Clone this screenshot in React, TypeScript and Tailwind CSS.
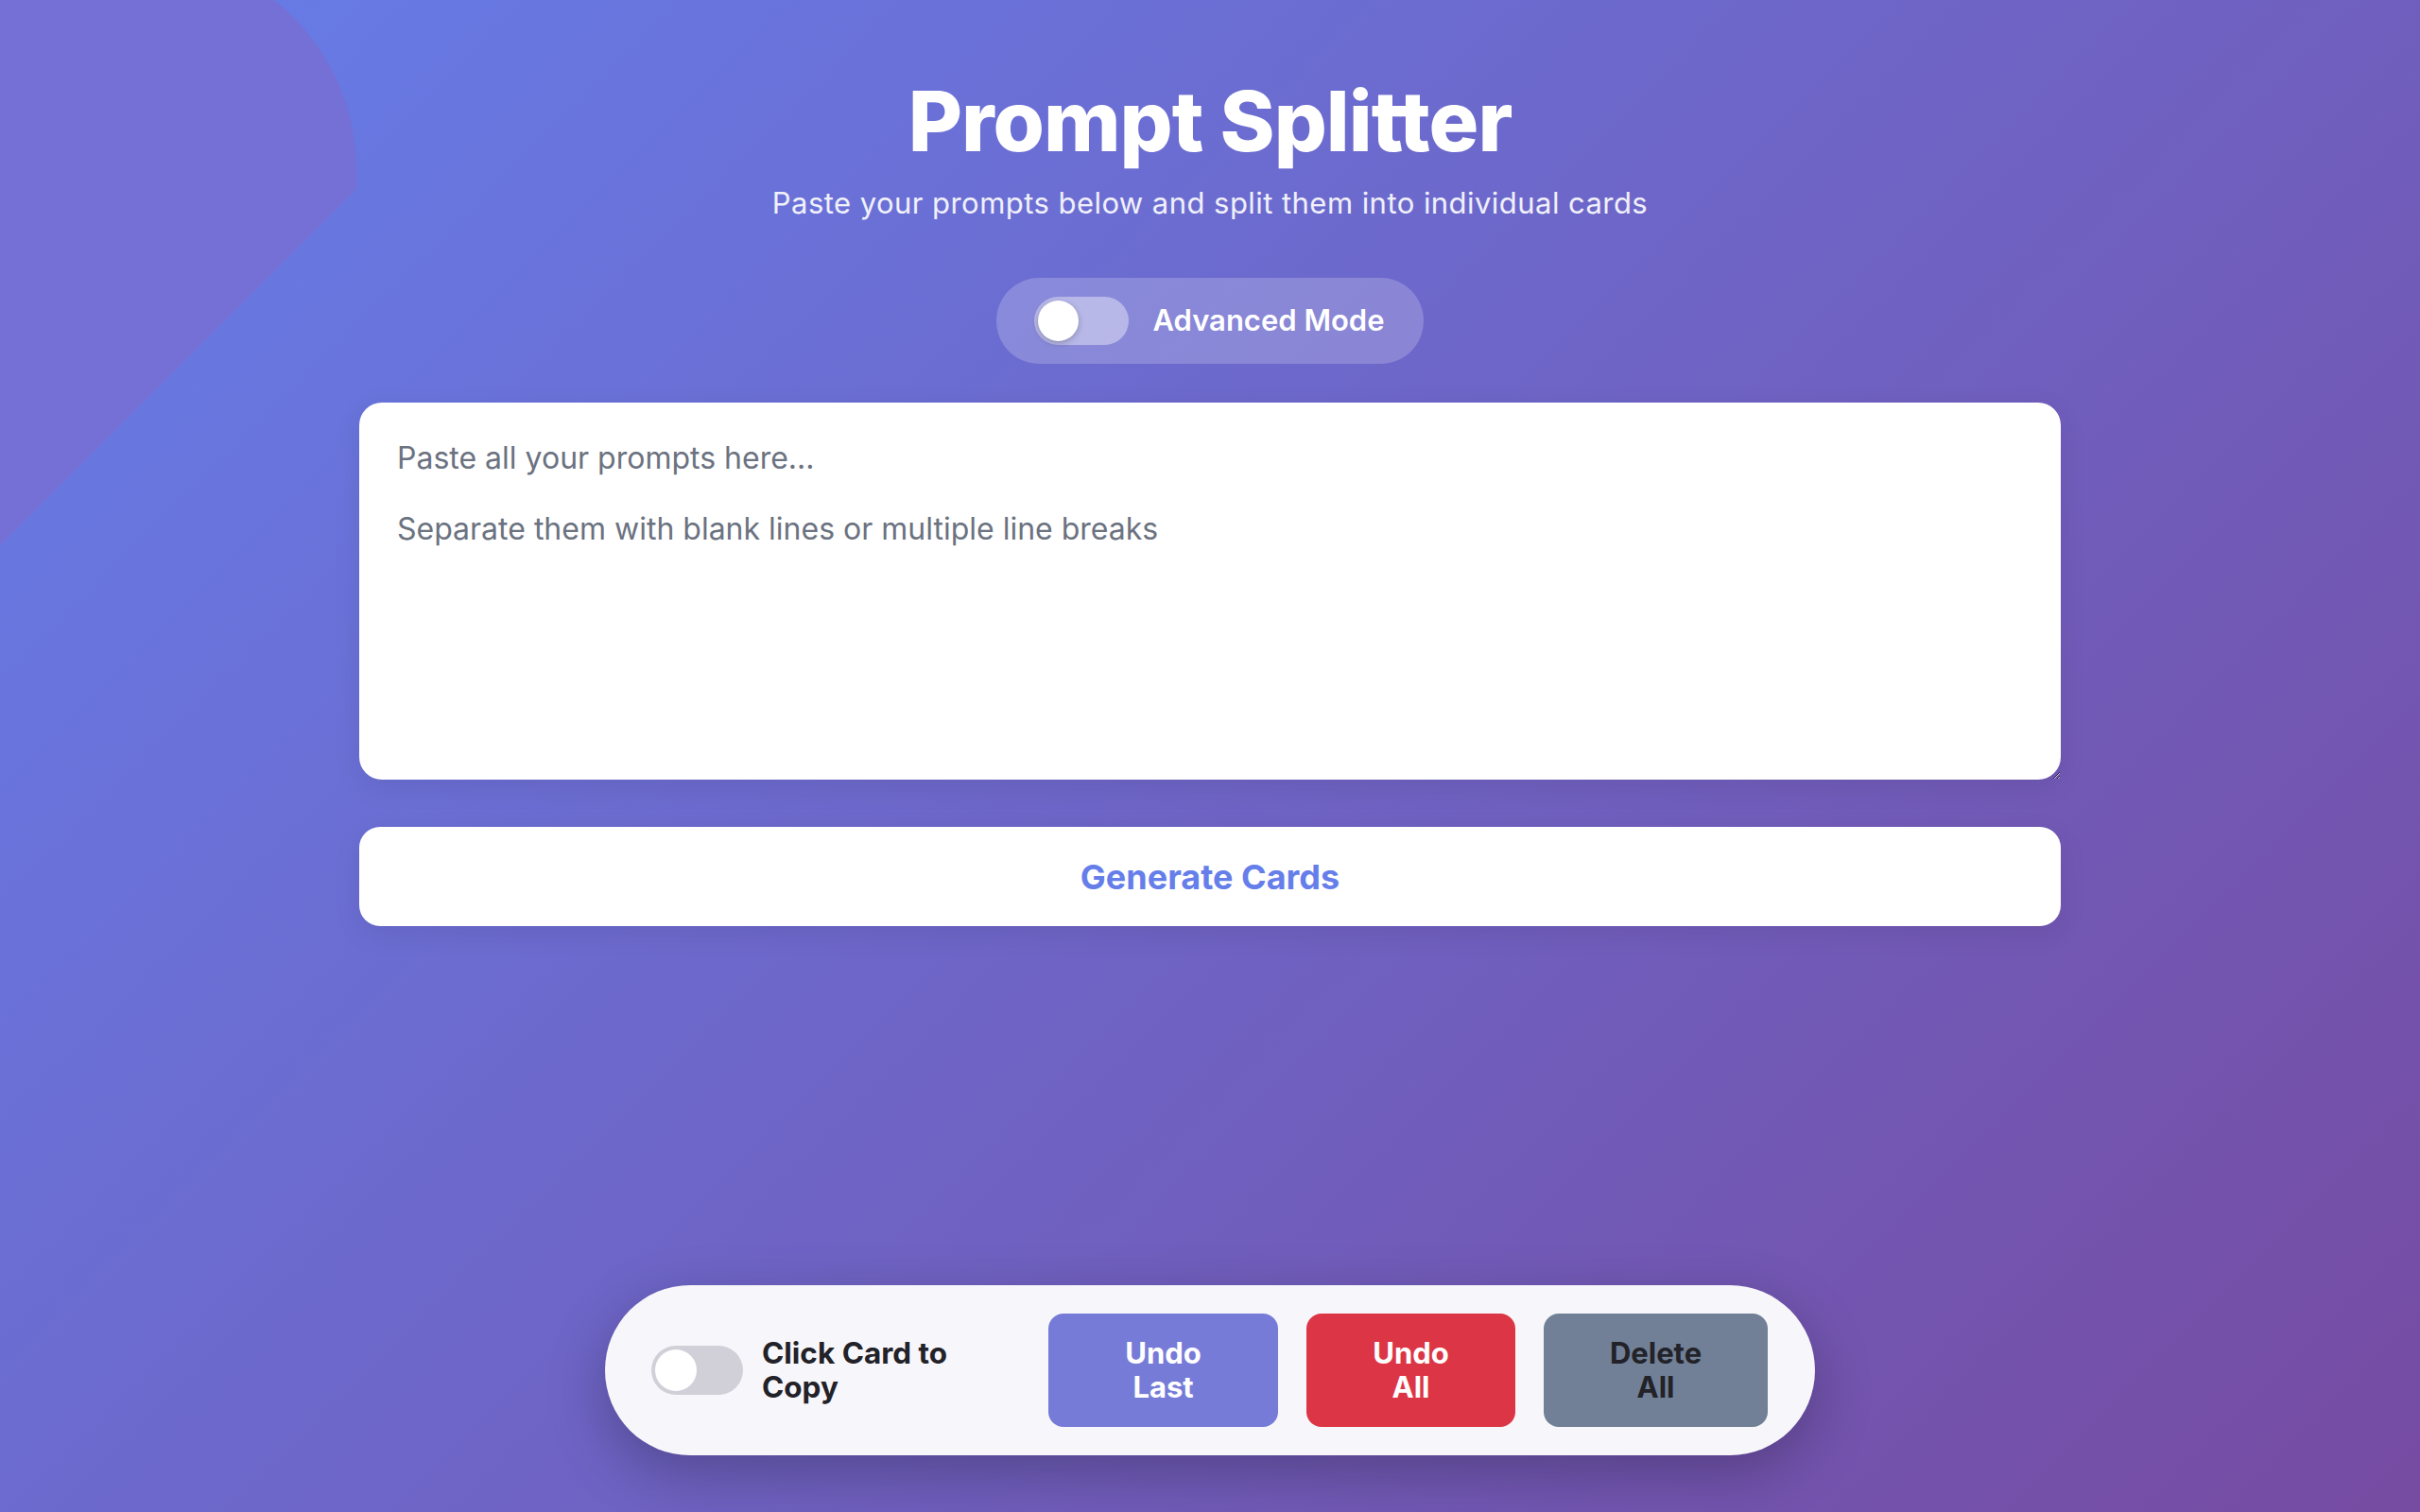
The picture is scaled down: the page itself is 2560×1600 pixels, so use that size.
import { useState } from 'react'
import { clsx } from 'clsx'

function Toggle({ on, onClick, track, knob }: { on: boolean; onClick: () => void; track: string; knob: string }) {
  return (
    <button
      type="button"
      onClick={onClick}
      className={clsx('flex items-center rounded-full p-[4px] transition-colors', track, on ? 'justify-end' : 'justify-start')}
    >
      <span className={clsx('block rounded-full bg-white', knob)} />
    </button>
  )
}

export default function App() {
  const [advanced, setAdvanced] = useState(false)
  const [clickCopy, setClickCopy] = useState(false)
  const [text, setText] = useState('')

  return (
    <div className="relative min-h-screen overflow-hidden bg-[linear-gradient(135deg,#667eea_0%,#764ba2_100%)] font-['Inter','Noto_Sans',sans-serif] flex flex-col items-center">
      {/* background decoration */}
      <svg className="absolute left-0 top-0 pointer-events-none" width="380" height="580" viewBox="0 0 380 580">
        <path d="M0 0H290A230 230 0 0 1 377 180V200L0 577Z" fill="#7570d5" />
      </svg>

      <h1 className="relative mt-[84px] text-[88px] leading-none font-extrabold text-white tracking-[-1px]">
        Prompt Splitter
      </h1>
      <p className="relative mt-[24px] text-[31px] leading-[37px] text-white/90 tracking-[0.45px]">
        Paste your prompts below and split them into individual cards
      </p>

      <div className="relative mt-[61px] flex h-[91px] items-center gap-[25px] rounded-full bg-white/20 pl-[40px] pr-[41px]">
        <Toggle
          on={advanced}
          onClick={() => setAdvanced(!advanced)}
          track="w-[100px] h-[51px] bg-white/40"
          knob="w-[43px] h-[43px] shadow-[0_2px_6px_rgba(0,0,0,0.25)]"
        />
        <span className="text-[31px] font-semibold text-white">Advanced Mode</span>
      </div>

      <textarea
        value={text}
        onChange={e => setText(e.target.value)}
        placeholder={'Paste all your prompts here...\n\nSeparate them with blank lines or multiple line breaks'}
        className="relative mt-[41px] h-[399px] w-[1800px] resize-y rounded-[24px] bg-white p-[40px] text-[32px] leading-[37.5px] text-gray-800 placeholder:text-[#6b7280] outline-none shadow-[0_8px_30px_rgba(0,0,0,0.08)]"
      />

      <button
        type="button"
        className="relative mt-[50px] h-[105px] w-[1800px] rounded-[22px] bg-white text-[36px] font-bold text-[#667eea] shadow-[0_8px_30px_rgba(0,0,0,0.08)]"
      >
        Generate Cards
      </button>

      <div className="relative mt-auto mb-[60px] flex h-[180px] w-[1280px] items-center justify-between rounded-full bg-[#f7f7fb] pl-[49px] pr-[50px] shadow-[0_20px_60px_rgba(0,0,0,0.25)]">
        <div className="flex items-center gap-[20px]">
          <Toggle
            on={clickCopy}
            onClick={() => setClickCopy(!clickCopy)}
            track="w-[97px] h-[52px] bg-[#d1d0d9]"
            knob="w-[44px] h-[44px]"
          />
          <span className="w-[220px] text-[31.5px] font-bold leading-[36px] text-[#222228]">Click Card to Copy</span>
        </div>
        <div className="flex items-center gap-[30px]">
          <button type="button" className="h-[120px] w-[243px] rounded-[16px] bg-[#777bd8] text-[31px] font-bold leading-[36px] text-white">
            Undo<br />Last
          </button>
          <button type="button" className="h-[120px] w-[221px] rounded-[16px] bg-[#dc3545] text-[31px] font-bold leading-[36px] text-white">
            Undo<br />All
          </button>
          <button type="button" className="h-[120px] w-[237px] rounded-[16px] bg-[#718096] text-[31px] font-bold leading-[36px] text-[#222228]">
            Delete<br />All
          </button>
        </div>
      </div>
    </div>
  )
}
